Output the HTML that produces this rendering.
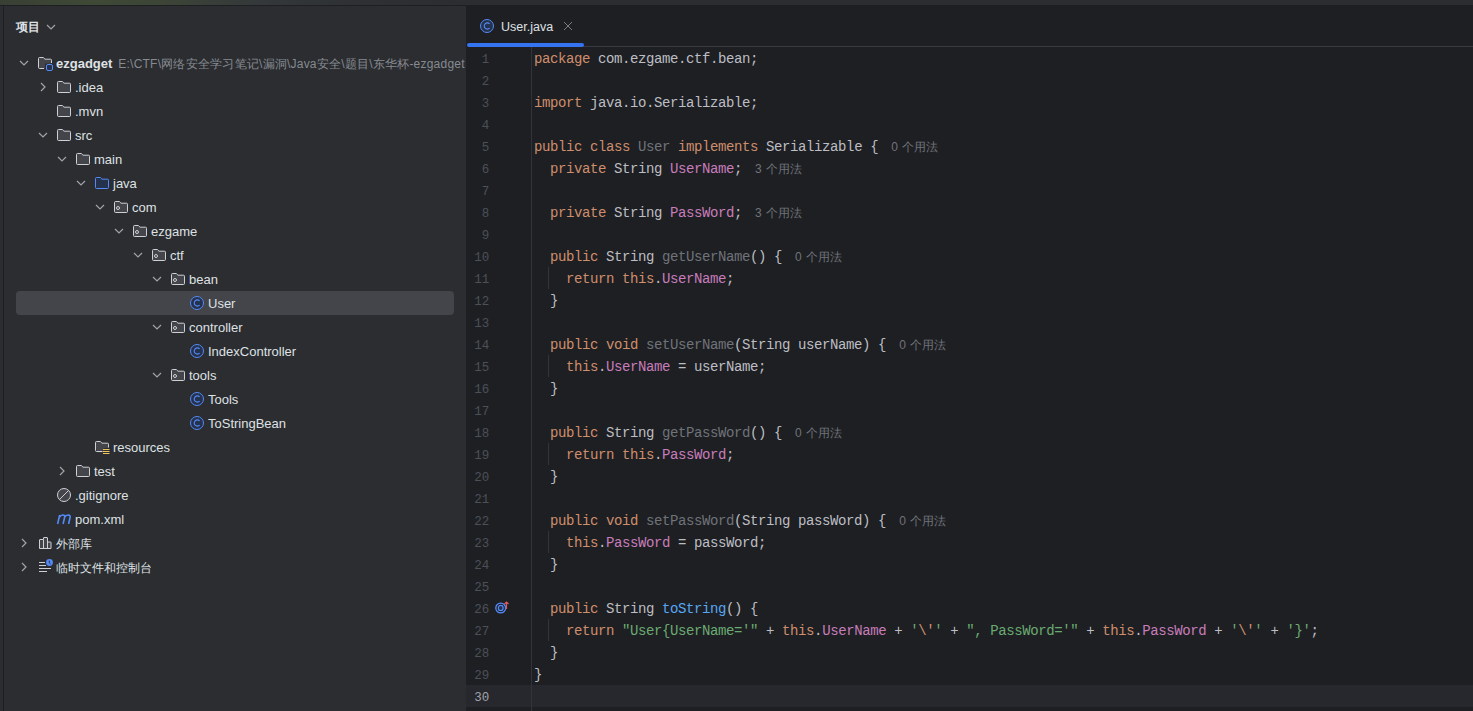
<!DOCTYPE html>
<html><head><meta charset="utf-8">
<style>
*{margin:0;padding:0;box-sizing:border-box}
html,body{width:1473px;height:711px;overflow:hidden;background:#2B2D30;font-family:"Liberation Sans",sans-serif;}
#top{position:absolute;left:0;top:0;width:1473px;height:5px;background:linear-gradient(90deg,#393f34 0px,#3f4936 90px,#3d4536 160px,#34383a 260px,#2e3033 360px,#2B2D30 460px)}
#topb{position:absolute;left:0;top:5px;width:1473px;height:1px;background:#1E1F22}
#lb{position:absolute;left:3px;top:6px;width:1px;height:705px;background:#1E1F22}
#panel{position:absolute;left:4px;top:6px;width:462px;height:705px;background:#2B2D30;overflow:hidden}
#ptitle{position:absolute;left:12px;top:13px;font-size:12px;font-weight:bold;color:#DFE1E5;line-height:16px}
.row{position:absolute;left:0;height:24px;width:462px;font-size:13px;line-height:24px;color:#DFE1E5;white-space:nowrap}
.row .t{position:absolute;top:1px}
.row svg{position:absolute;top:4px}
.sel{position:absolute;left:12px;top:285px;width:438px;height:24px;border-radius:4px;background:#43454A}
#editor{position:absolute;left:466px;top:6px;width:1007px;height:705px;background:#1E1F22;overflow:hidden}
#tabb{position:absolute;left:2px;top:40px;width:1005px;height:1px;background:#393B40}
#tabu{position:absolute;left:1px;top:37px;width:117px;height:4px;border-radius:2px;background:#3574F0}
#tabtxt{position:absolute;left:35px;top:13px;font-size:12.5px;line-height:16px;color:#DFE1E5}
#gsep{position:absolute;left:65px;top:41px;width:1px;height:670px;background:#313438}
.cl{position:absolute;left:68px;height:22px;line-height:22px;font-family:"Liberation Mono",monospace;font-size:14px;letter-spacing:-0.4px;color:#BCBEC4;white-space:pre;padding-top:1px}
.ln{position:absolute;left:0;width:23.3px;text-align:right;height:22px;line-height:22px;font-family:"Liberation Mono",monospace;font-size:12.5px;color:#4B5059;padding-top:2px}
.k{color:#CF8E6D}.f{color:#C77DBB}.s{color:#6AAB73}.u{color:#6F737A}.m{color:#56A8F5}
.h{font-family:"Liberation Sans",sans-serif;font-size:12px;letter-spacing:0;word-spacing:1px;color:#6F737A}
.ig{position:absolute;left:82px;width:1px;height:22px;background:#313438}
#cur{position:absolute;left:0;top:679px;width:1007px;height:22px;background:#26282E}

</style></head><body>
<div id="top"></div><div id="topb"></div><div id="lb"></div>
<div id="panel">
<div id="ptitle">项目</div>
<svg style="position:absolute;left:42px;top:16px" width="10" height="10" viewBox="0 0 10 10"><path d="M1 3l4 4 4-4" fill="none" stroke="#A0A3AA" stroke-width="1.2"/></svg>
<div class="sel"></div>
<div class="row" style="top:45px"><span style="position:absolute;left:15px;top:0"><svg width="10" height="10" viewBox="0 0 10 10" style="top:7px"><path d="M1 3l4 4 4-4" fill="none" stroke="#A0A3AA" stroke-width="1.2"/></svg></span><span style="position:absolute;left:33px;top:0"><svg width="16" height="16" viewBox="0 0 16 16"><path d="M1.5 3.5a1 1 0 0 1 1-1h3.8l1.7 1.7h5.5a1 1 0 0 1 1 1v3.3h-6.5v5h-5.5a1 1 0 0 1-1-1z" fill="#43454A"/><path d="M7 13.5h-4.5a1 1 0 0 1-1-1v-9a1 1 0 0 1 1-1h3.8l1.7 1.7h5.5a1 1 0 0 1 1 1v2.8" fill="none" stroke="#CED0D6"/><rect x="9.5" y="9.5" width="6" height="6" rx="1.5" fill="#25324D" stroke="#548AF7"/></svg></span><span class="t" style="left:52px"><b>ezgadget</b><span style="color:#868A91;margin-left:6px;font-size:12px;letter-spacing:0.22px">E:\CTF\网络安全学习笔记\漏洞\Java安全\题目\东华杯-ezgadget</span></span></div><div class="row" style="top:69px"><span style="position:absolute;left:34px;top:0"><svg width="10" height="10" viewBox="0 0 10 10" style="top:7px"><path d="M3 1l4 4-4 4" fill="none" stroke="#A0A3AA" stroke-width="1.2"/></svg></span><span style="position:absolute;left:52px;top:0"><svg width="16" height="16" viewBox="0 0 16 16"><path d="M1.5 3.5a1 1 0 0 1 1-1h3.8l1.7 1.7h5.5a1 1 0 0 1 1 1v7.3a1 1 0 0 1-1 1h-11a1 1 0 0 1-1-1z" fill="#43454A" stroke="#CED0D6" stroke-width="1"/></svg></span><span class="t" style="left:71px">.idea</span></div><div class="row" style="top:93px"><span style="position:absolute;left:52px;top:0"><svg width="16" height="16" viewBox="0 0 16 16"><path d="M1.5 3.5a1 1 0 0 1 1-1h3.8l1.7 1.7h5.5a1 1 0 0 1 1 1v7.3a1 1 0 0 1-1 1h-11a1 1 0 0 1-1-1z" fill="#43454A" stroke="#CED0D6" stroke-width="1"/></svg></span><span class="t" style="left:71px">.mvn</span></div><div class="row" style="top:117px"><span style="position:absolute;left:34px;top:0"><svg width="10" height="10" viewBox="0 0 10 10" style="top:7px"><path d="M1 3l4 4 4-4" fill="none" stroke="#A0A3AA" stroke-width="1.2"/></svg></span><span style="position:absolute;left:52px;top:0"><svg width="16" height="16" viewBox="0 0 16 16"><path d="M1.5 3.5a1 1 0 0 1 1-1h3.8l1.7 1.7h5.5a1 1 0 0 1 1 1v7.3a1 1 0 0 1-1 1h-11a1 1 0 0 1-1-1z" fill="#43454A" stroke="#CED0D6" stroke-width="1"/></svg></span><span class="t" style="left:71px">src</span></div><div class="row" style="top:141px"><span style="position:absolute;left:53px;top:0"><svg width="10" height="10" viewBox="0 0 10 10" style="top:7px"><path d="M1 3l4 4 4-4" fill="none" stroke="#A0A3AA" stroke-width="1.2"/></svg></span><span style="position:absolute;left:71px;top:0"><svg width="16" height="16" viewBox="0 0 16 16"><path d="M1.5 3.5a1 1 0 0 1 1-1h3.8l1.7 1.7h5.5a1 1 0 0 1 1 1v7.3a1 1 0 0 1-1 1h-11a1 1 0 0 1-1-1z" fill="#43454A" stroke="#CED0D6" stroke-width="1"/></svg></span><span class="t" style="left:90px">main</span></div><div class="row" style="top:165px"><span style="position:absolute;left:72px;top:0"><svg width="10" height="10" viewBox="0 0 10 10" style="top:7px"><path d="M1 3l4 4 4-4" fill="none" stroke="#A0A3AA" stroke-width="1.2"/></svg></span><span style="position:absolute;left:90px;top:0"><svg width="16" height="16" viewBox="0 0 16 16"><path d="M1.5 3.5a1 1 0 0 1 1-1h3.8l1.7 1.7h5.5a1 1 0 0 1 1 1v7.3a1 1 0 0 1-1 1h-11a1 1 0 0 1-1-1z" fill="#25324D" stroke="#548AF7" stroke-width="1"/></svg></span><span class="t" style="left:109px">java</span></div><div class="row" style="top:189px"><span style="position:absolute;left:91px;top:0"><svg width="10" height="10" viewBox="0 0 10 10" style="top:7px"><path d="M1 3l4 4 4-4" fill="none" stroke="#A0A3AA" stroke-width="1.2"/></svg></span><span style="position:absolute;left:109px;top:0"><svg width="16" height="16" viewBox="0 0 16 16"><path d="M1.5 3.5a1 1 0 0 1 1-1h3.8l1.7 1.7h5.5a1 1 0 0 1 1 1v7.3a1 1 0 0 1-1 1h-11a1 1 0 0 1-1-1z" fill="#43454A" stroke="#CED0D6" stroke-width="1"/><circle cx="5" cy="9" r="1.5" fill="none" stroke="#CED0D6" stroke-width="1"/></svg></span><span class="t" style="left:128px">com</span></div><div class="row" style="top:213px"><span style="position:absolute;left:110px;top:0"><svg width="10" height="10" viewBox="0 0 10 10" style="top:7px"><path d="M1 3l4 4 4-4" fill="none" stroke="#A0A3AA" stroke-width="1.2"/></svg></span><span style="position:absolute;left:128px;top:0"><svg width="16" height="16" viewBox="0 0 16 16"><path d="M1.5 3.5a1 1 0 0 1 1-1h3.8l1.7 1.7h5.5a1 1 0 0 1 1 1v7.3a1 1 0 0 1-1 1h-11a1 1 0 0 1-1-1z" fill="#43454A" stroke="#CED0D6" stroke-width="1"/><circle cx="5" cy="9" r="1.5" fill="none" stroke="#CED0D6" stroke-width="1"/></svg></span><span class="t" style="left:147px">ezgame</span></div><div class="row" style="top:237px"><span style="position:absolute;left:129px;top:0"><svg width="10" height="10" viewBox="0 0 10 10" style="top:7px"><path d="M1 3l4 4 4-4" fill="none" stroke="#A0A3AA" stroke-width="1.2"/></svg></span><span style="position:absolute;left:147px;top:0"><svg width="16" height="16" viewBox="0 0 16 16"><path d="M1.5 3.5a1 1 0 0 1 1-1h3.8l1.7 1.7h5.5a1 1 0 0 1 1 1v7.3a1 1 0 0 1-1 1h-11a1 1 0 0 1-1-1z" fill="#43454A" stroke="#CED0D6" stroke-width="1"/><circle cx="5" cy="9" r="1.5" fill="none" stroke="#CED0D6" stroke-width="1"/></svg></span><span class="t" style="left:166px">ctf</span></div><div class="row" style="top:261px"><span style="position:absolute;left:148px;top:0"><svg width="10" height="10" viewBox="0 0 10 10" style="top:7px"><path d="M1 3l4 4 4-4" fill="none" stroke="#A0A3AA" stroke-width="1.2"/></svg></span><span style="position:absolute;left:166px;top:0"><svg width="16" height="16" viewBox="0 0 16 16"><path d="M1.5 3.5a1 1 0 0 1 1-1h3.8l1.7 1.7h5.5a1 1 0 0 1 1 1v7.3a1 1 0 0 1-1 1h-11a1 1 0 0 1-1-1z" fill="#43454A" stroke="#CED0D6" stroke-width="1"/><circle cx="5" cy="9" r="1.5" fill="none" stroke="#CED0D6" stroke-width="1"/></svg></span><span class="t" style="left:185px">bean</span></div><div class="row" style="top:285px"><span style="position:absolute;left:185px;top:0"><svg width="16" height="16" viewBox="0 0 16 16"><circle cx="8" cy="8" r="6.5" fill="#25324D" stroke="#548AF7"/><path d="M10.6 5.9A3.1 3.1 0 1 0 10.6 10.1" fill="none" stroke="#548AF7" stroke-width="1.1"/></svg></span><span class="t" style="left:204px">User</span></div><div class="row" style="top:309px"><span style="position:absolute;left:148px;top:0"><svg width="10" height="10" viewBox="0 0 10 10" style="top:7px"><path d="M1 3l4 4 4-4" fill="none" stroke="#A0A3AA" stroke-width="1.2"/></svg></span><span style="position:absolute;left:166px;top:0"><svg width="16" height="16" viewBox="0 0 16 16"><path d="M1.5 3.5a1 1 0 0 1 1-1h3.8l1.7 1.7h5.5a1 1 0 0 1 1 1v7.3a1 1 0 0 1-1 1h-11a1 1 0 0 1-1-1z" fill="#43454A" stroke="#CED0D6" stroke-width="1"/><circle cx="5" cy="9" r="1.5" fill="none" stroke="#CED0D6" stroke-width="1"/></svg></span><span class="t" style="left:185px">controller</span></div><div class="row" style="top:333px"><span style="position:absolute;left:185px;top:0"><svg width="16" height="16" viewBox="0 0 16 16"><circle cx="8" cy="8" r="6.5" fill="#25324D" stroke="#548AF7"/><path d="M10.6 5.9A3.1 3.1 0 1 0 10.6 10.1" fill="none" stroke="#548AF7" stroke-width="1.1"/></svg></span><span class="t" style="left:204px">IndexController</span></div><div class="row" style="top:357px"><span style="position:absolute;left:148px;top:0"><svg width="10" height="10" viewBox="0 0 10 10" style="top:7px"><path d="M1 3l4 4 4-4" fill="none" stroke="#A0A3AA" stroke-width="1.2"/></svg></span><span style="position:absolute;left:166px;top:0"><svg width="16" height="16" viewBox="0 0 16 16"><path d="M1.5 3.5a1 1 0 0 1 1-1h3.8l1.7 1.7h5.5a1 1 0 0 1 1 1v7.3a1 1 0 0 1-1 1h-11a1 1 0 0 1-1-1z" fill="#43454A" stroke="#CED0D6" stroke-width="1"/><circle cx="5" cy="9" r="1.5" fill="none" stroke="#CED0D6" stroke-width="1"/></svg></span><span class="t" style="left:185px">tools</span></div><div class="row" style="top:381px"><span style="position:absolute;left:185px;top:0"><svg width="16" height="16" viewBox="0 0 16 16"><circle cx="8" cy="8" r="6.5" fill="#25324D" stroke="#548AF7"/><path d="M10.6 5.9A3.1 3.1 0 1 0 10.6 10.1" fill="none" stroke="#548AF7" stroke-width="1.1"/></svg></span><span class="t" style="left:204px">Tools</span></div><div class="row" style="top:405px"><span style="position:absolute;left:185px;top:0"><svg width="16" height="16" viewBox="0 0 16 16"><circle cx="8" cy="8" r="6.5" fill="#25324D" stroke="#548AF7"/><path d="M10.6 5.9A3.1 3.1 0 1 0 10.6 10.1" fill="none" stroke="#548AF7" stroke-width="1.1"/></svg></span><span class="t" style="left:204px">ToStringBean</span></div><div class="row" style="top:429px"><span style="position:absolute;left:90px;top:0"><svg width="16" height="16" viewBox="0 0 16 16"><path d="M1.5 3.5a1 1 0 0 1 1-1h3.8l1.7 1.7h5.5a1 1 0 0 1 1 1v3.8h-5v4.5h-6a1 1 0 0 1-1-1z" fill="#43454A"/><path d="M8.5 12.5h-6a1 1 0 0 1-1-1v-8a1 1 0 0 1 1-1h3.8l1.7 1.7h5.5a1 1 0 0 1 1 1v3.3" fill="none" stroke="#CED0D6"/><path d="M9 10.5h6.5M9 12.5h6.5M9 14.5h6.5" stroke="#F2C55C" stroke-width="1.1"/></svg></span><span class="t" style="left:109px">resources</span></div><div class="row" style="top:453px"><span style="position:absolute;left:53px;top:0"><svg width="10" height="10" viewBox="0 0 10 10" style="top:7px"><path d="M3 1l4 4-4 4" fill="none" stroke="#A0A3AA" stroke-width="1.2"/></svg></span><span style="position:absolute;left:71px;top:0"><svg width="16" height="16" viewBox="0 0 16 16"><path d="M1.5 3.5a1 1 0 0 1 1-1h3.8l1.7 1.7h5.5a1 1 0 0 1 1 1v7.3a1 1 0 0 1-1 1h-11a1 1 0 0 1-1-1z" fill="#43454A" stroke="#CED0D6" stroke-width="1"/></svg></span><span class="t" style="left:90px">test</span></div><div class="row" style="top:477px"><span style="position:absolute;left:52px;top:0"><svg width="16" height="16" viewBox="0 0 16 16"><circle cx="8" cy="8" r="6.5" fill="#43454A" stroke="#CED0D6"/><path d="M3.5 12.5L12.5 3.5" stroke="#CED0D6"/></svg></span><span class="t" style="left:71px">.gitignore</span></div><div class="row" style="top:501px"><span style="position:absolute;left:52px;top:0"><svg width="16" height="16" viewBox="0 0 16 16"><path d="M1.6 13L3.7 4M3.3 6.3C4.3 4.5 5.8 3.9 7.1 4.0 8.5 4.1 8.9 5.0 8.6 6.3L7.1 13M8.5 6.3C9.5 4.5 11 3.9 12.4 4.0 13.9 4.1 14.4 5.0 14.1 6.3L12.6 13" fill="none" stroke="#548AF7" stroke-width="1.6"/></svg></span><span class="t" style="left:71px">pom.xml</span></div><div class="row" style="top:525px"><span style="position:absolute;left:15px;top:0"><svg width="10" height="10" viewBox="0 0 10 10" style="top:7px"><path d="M3 1l4 4-4 4" fill="none" stroke="#A0A3AA" stroke-width="1.2"/></svg></span><span style="position:absolute;left:33px;top:0"><svg width="16" height="16" viewBox="0 0 16 16"><path d="M2.5 13.5v-8.5a0.5 0.5 0 0 1 .5-.5h3.5v-1.5a0.5 0.5 0 0 1 .5-.5h3a0.5 0.5 0 0 1 .5.5v4h3a0.5 0.5 0 0 1 .5.5v6z" fill="#43454A" stroke="#CED0D6"/><path d="M6.5 5v8.5M10.5 7v6.5" stroke="#CED0D6"/></svg></span><span class="t" style="left:52px"><span style="font-size:12px">外部库</span></span></div><div class="row" style="top:549px"><span style="position:absolute;left:15px;top:0"><svg width="10" height="10" viewBox="0 0 10 10" style="top:7px"><path d="M3 1l4 4-4 4" fill="none" stroke="#A0A3AA" stroke-width="1.2"/></svg></span><span style="position:absolute;left:33px;top:0"><svg width="16" height="16" viewBox="0 0 16 16"><path d="M2 3.5h6M2 6.5h7M2 9.5h12M2 12.5h8" stroke="#CED0D6"/><circle cx="12.5" cy="3.5" r="3.4" fill="#548AF7"/><path d="M12.3 1.6v2.3l1.3 1.1" stroke="#2B2D30" stroke-width="0.9" fill="none"/></svg></span><span class="t" style="left:52px"><span style="font-size:12px">临时文件和控制台</span></span></div>
</div>
<div id="editor">
<div id="cur"></div>
<svg style="position:absolute;left:13px;top:12px" width="16" height="16" viewBox="0 0 16 16"><circle cx="8" cy="8" r="6.5" fill="#25324D" stroke="#548AF7"/><path d="M10.6 5.9A3.1 3.1 0 1 0 10.6 10.1" fill="none" stroke="#548AF7" stroke-width="1.1"/></svg>
<div id="tabtxt">User.java</div>
<svg style="position:absolute;left:96px;top:14px" width="12" height="12" viewBox="0 0 12 12"><path d="M2 2l8 8M10 2l-8 8" stroke="#7A7E85" stroke-width="1"/></svg>
<div id="tabb"></div>
<div id="tabu"></div>
<div id="gsep"></div>
<svg style="position:absolute;left:29px;top:593px" width="16" height="16" viewBox="0 0 16 16"><circle cx="5.7" cy="9" r="4.9" fill="none" stroke="#548AF7" stroke-width="1.3"/><ellipse cx="5.7" cy="9" rx="2.4" ry="2.7" fill="#25324D" stroke="#548AF7" stroke-width="1.2"/><path d="M11.5 10V3M9.5 5l2-2 2 2" fill="none" stroke="#DB5C5C" stroke-width="1.2"/></svg>
<div class="ln" style="top:41px;color:#4B5059">1</div><div class="cl" style="top:41px"><span class="k">package</span> com.ezgame.ctf.bean;</div><div class="ln" style="top:63px;color:#4B5059">2</div><div class="cl" style="top:63px"></div><div class="ln" style="top:85px;color:#4B5059">3</div><div class="cl" style="top:85px"><span class="k">import</span> java.io.Serializable;</div><div class="ln" style="top:107px;color:#4B5059">4</div><div class="cl" style="top:107px"></div><div class="ln" style="top:129px;color:#4B5059">5</div><div class="cl" style="top:129px"><span class="k">public</span> <span class="k">class</span> <span class="u">User</span> <span class="k">implements</span> Serializable {<span class="h" style="margin-left:13px">0 个用法</span></div><div class="ln" style="top:151px;color:#4B5059">6</div><div class="cl" style="top:151px">  <span class="k">private</span> String <span class="f">UserName</span>;<span class="h" style="margin-left:13px">3 个用法</span></div><div class="ln" style="top:173px;color:#4B5059">7</div><div class="cl" style="top:173px"></div><div class="ln" style="top:195px;color:#4B5059">8</div><div class="cl" style="top:195px">  <span class="k">private</span> String <span class="f">PassWord</span>;<span class="h" style="margin-left:13px">3 个用法</span></div><div class="ln" style="top:217px;color:#4B5059">9</div><div class="cl" style="top:217px"></div><div class="ln" style="top:239px;color:#4B5059">10</div><div class="cl" style="top:239px">  <span class="k">public</span> String <span class="u">getUserName</span>() {<span class="h" style="margin-left:13px">0 个用法</span></div><div class="ln" style="top:261px;color:#4B5059">11</div><div class="cl" style="top:261px">    <span class="k">return</span> <span class="k">this</span>.<span class="f">UserName</span>;</div><div class="ig" style="top:261px"></div><div class="ln" style="top:283px;color:#4B5059">12</div><div class="cl" style="top:283px">  }</div><div class="ln" style="top:305px;color:#4B5059">13</div><div class="cl" style="top:305px"></div><div class="ln" style="top:327px;color:#4B5059">14</div><div class="cl" style="top:327px">  <span class="k">public</span> <span class="k">void</span> <span class="u">setUserName</span>(String userName) {<span class="h" style="margin-left:13px">0 个用法</span></div><div class="ln" style="top:349px;color:#4B5059">15</div><div class="cl" style="top:349px">    <span class="k">this</span>.<span class="f">UserName</span> = userName;</div><div class="ig" style="top:349px"></div><div class="ln" style="top:371px;color:#4B5059">16</div><div class="cl" style="top:371px">  }</div><div class="ln" style="top:393px;color:#4B5059">17</div><div class="cl" style="top:393px"></div><div class="ln" style="top:415px;color:#4B5059">18</div><div class="cl" style="top:415px">  <span class="k">public</span> String <span class="u">getPassWord</span>() {<span class="h" style="margin-left:13px">0 个用法</span></div><div class="ln" style="top:437px;color:#4B5059">19</div><div class="cl" style="top:437px">    <span class="k">return</span> <span class="k">this</span>.<span class="f">PassWord</span>;</div><div class="ig" style="top:437px"></div><div class="ln" style="top:459px;color:#4B5059">20</div><div class="cl" style="top:459px">  }</div><div class="ln" style="top:481px;color:#4B5059">21</div><div class="cl" style="top:481px"></div><div class="ln" style="top:503px;color:#4B5059">22</div><div class="cl" style="top:503px">  <span class="k">public</span> <span class="k">void</span> <span class="u">setPassWord</span>(String passWord) {<span class="h" style="margin-left:13px">0 个用法</span></div><div class="ln" style="top:525px;color:#4B5059">23</div><div class="cl" style="top:525px">    <span class="k">this</span>.<span class="f">PassWord</span> = passWord;</div><div class="ig" style="top:525px"></div><div class="ln" style="top:547px;color:#4B5059">24</div><div class="cl" style="top:547px">  }</div><div class="ln" style="top:569px;color:#4B5059">25</div><div class="cl" style="top:569px"></div><div class="ln" style="top:591px;color:#4B5059">26</div><div class="cl" style="top:591px">  <span class="k">public</span> String <span class="m">toString</span>() {</div><div class="ln" style="top:613px;color:#4B5059">27</div><div class="cl" style="top:613px">    <span class="k">return</span> <span class="s">&quot;User{UserName=&#x27;&quot;</span> + <span class="k">this</span>.<span class="f">UserName</span> + <span class="s">&#x27;</span><span class="k">\&#x27;</span><span class="s">&#x27;</span> + <span class="s">&quot;, PassWord=&#x27;&quot;</span> + <span class="k">this</span>.<span class="f">PassWord</span> + <span class="s">&#x27;</span><span class="k">\&#x27;</span><span class="s">&#x27;</span> + <span class="s">&#x27;}&#x27;</span>;</div><div class="ig" style="top:613px"></div><div class="ln" style="top:635px;color:#4B5059">28</div><div class="cl" style="top:635px">  }</div><div class="ln" style="top:657px;color:#4B5059">29</div><div class="cl" style="top:657px">}</div><div class="ln" style="top:679px;color:#A1A3AB">30</div><div class="cl" style="top:679px"></div>
</div>
</body></html>
